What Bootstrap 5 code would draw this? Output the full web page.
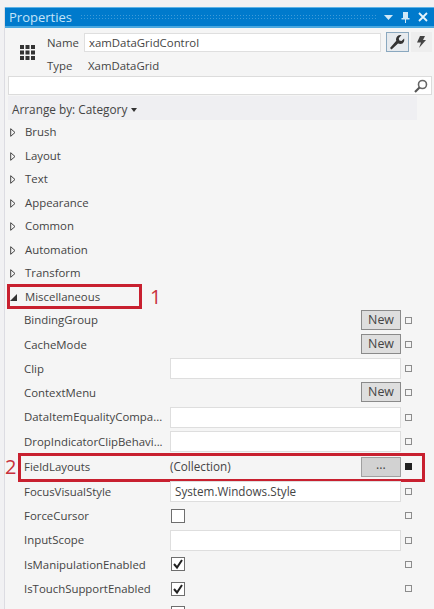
<!DOCTYPE html>
<html lang="en"><head><meta charset="utf-8"><title>Properties</title>
<link href="https://cdn.jsdelivr.net/npm/bootstrap@5.3.0/dist/css/bootstrap.min.css" rel="stylesheet">
<style>
html,body{margin:0;height:609px;overflow:hidden;background:#f1f1f3}
body{font-family:"Open Sans","Liberation Sans",sans-serif;font-size:11.4px;color:#444;line-height:1}
.pane{margin:7px 0 0 4px;height:602px;overflow:hidden;background:#f5f5f5;border-left:1px solid #dcdce2;position:relative}
.titlebar{height:21px;background:#007acc;color:#c4e4f8;padding:0 6px 0 4px;border-top:1px solid #5cb2e6;border-bottom:2px solid #4aa8e0;font-size:13px}
.dots{height:7px;background-image:radial-gradient(#3f9bd8 .7px,transparent .8px);background-size:3px 3px}
.head{height:48px;padding-left:9px}
.gridico{width:15px;margin:0 12px 0 6px}
.lbl{width:37px}
.namebox{width:297px;height:19px;background:#fff;border:1px solid #dfdfdf;padding-left:4px;font-size:11.4px}
.toolb{width:23px;height:20px;border:1px solid #8aa8bf;background:#e6eaee;margin-left:5px}
.toolb2{width:21px;height:20px;background:#eeeeee;margin-left:2px}
.search{height:19px;margin-left:3px;width:424px;background:#fff;border:1px solid #dcdcdc;padding-right:3px}
.arrange{height:24px;margin:1px 0 0 3px;width:409px;background:#efeff2;padding:3px 0 0 4px;font-size:11.8px}
.cat{height:23.5px;padding-left:5px}
.tri{width:15px;flex:none}
.proprow{height:24.25px;padding-left:19px;position:relative}
.pname{width:146px;flex:none;white-space:nowrap}
.pval{width:231px;flex:none;height:21px;font-size:11.7px}
.tbox{background:#fff;border:1px solid #dedede;padding-left:4px}
.newb{width:40px;height:20px;margin-left:auto;background:#dedede;border:1px solid #8a8a8a;text-align:center;line-height:18px;color:#444;font-size:12.4px}
.dotb{background:#d2d2d2;border-color:#a0a0a0;color:#444;line-height:14px}
.marker{width:7px;height:7px;border:1px solid #8c8c8c;background:#f5f5f5;margin-left:4px;flex:none}
.marker.on{background:#222;border-color:#222}
.chk{width:14px;height:14px;border:1px solid #6e6e6e;background:#fff;margin-left:1px}
.redbox{position:absolute;border:3px solid #c8202f;pointer-events:none}
.redbox.one{left:2px;top:-1px;width:135px;height:25px}
.redbox.two{left:13px;top:-1px;width:407px;height:29px}
.rednum{position:absolute;color:#c8303c;font-size:20px;line-height:1}
.rednum.one{left:145px;top:2px}
.rednum.two{left:0;top:3px}
.tall{height:26px}
</style></head><body>
<div class="pane">
 <div class="titlebar d-flex align-items-center gap-2">
  <span>Properties</span><div class="dots flex-grow-1"></div>
  <svg width="9" height="5" viewBox="0 0 9 5"><path d="M0 0h9L4.500 5z" fill="#cfe8f7"/></svg>
  <svg width="9" height="12" viewBox="0 0 9 12"><path d="M2 1h5v6h1.500v1.500H5V12H4V8.500H.5V7H2z" fill="#cfe8f7"/></svg>
  <svg width="10" height="10" viewBox="0 0 10 10"><path d="M1 1l8 8M9 1l-8 8" stroke="#e6f4fc" stroke-width="1.800"/></svg>
 </div>
 <div class="head d-flex align-items-center">
  <svg class="gridico" viewBox="0 0 15 15" height="15"><g fill="#333"><rect width="4" height="4"/><rect x="5.500" width="4" height="4"/><rect x="11" width="4" height="4"/><rect y="5.500" width="4" height="4"/><rect x="5.500" y="5.500" width="4" height="4"/><rect x="11" y="5.500" width="4" height="4"/><rect y="11" width="4" height="4"/><rect x="5.500" y="11" width="4" height="4"/><rect x="11" y="11" width="4" height="4"/></g></svg>
  <div class="d-flex flex-column gap-1 flex-grow-1">
   <div class="d-flex align-items-center"><span class="lbl">Name</span><div class="namebox d-flex align-items-center">xamDataGridControl</div>
    <div class="toolb d-flex align-items-center justify-content-center"><svg width="17" height="16" viewBox="0 0 17 16"><path d="M1 14l1.500 1.500L9 9.500c2.500 1 5 .5 6-2 .4-1 .4-2 .1-3l-2.600 2.400-2.200-.5-.5-2.200L12.500 1c-3-.6-5.500 1.500-5.500 4.300 0 .6.100 1 .3 1.500z" fill="#333"/></svg></div>
    <div class="toolb2 d-flex align-items-center justify-content-center"><svg width="9" height="12" viewBox="0 0 9 12"><path d="M3 0h5L6 4h3L2 12l2-5.500H0z" fill="#444"/></svg></div>
   </div>
   <div class="d-flex align-items-center mt-1"><span class="lbl">Type</span><span class="ps-1">XamDataGrid</span></div>
  </div>
 </div>
 <div class="search d-flex align-items-center justify-content-end"><svg width="14" height="14" viewBox="0 0 14 14"><circle cx="8.500" cy="5.500" r="4" fill="none" stroke="#666" stroke-width="1.600"/><path d="M5.500 8.500L1 13" stroke="#555" stroke-width="2.200"/></svg></div>
 <div class="arrange d-flex align-items-center gap-1">Arrange by: Category <svg width="6" height="4" viewBox="0 0 6 4"><path d="M0 0h6L3 4z" fill="#333"/></svg></div>
 <div class="cat d-flex align-items-center"><span class="tri"><svg width="6" height="9" viewBox="0 0 6 9"><path d="M.7.700L5 4.500.7 8.300z" fill="none" stroke="#444"/></svg></span>Brush</div>
 <div class="cat d-flex align-items-center"><span class="tri"><svg width="6" height="9" viewBox="0 0 6 9"><path d="M.7.700L5 4.500.7 8.300z" fill="none" stroke="#444"/></svg></span>Layout</div>
 <div class="cat d-flex align-items-center"><span class="tri"><svg width="6" height="9" viewBox="0 0 6 9"><path d="M.7.700L5 4.500.7 8.300z" fill="none" stroke="#444"/></svg></span>Text</div>
 <div class="cat d-flex align-items-center"><span class="tri"><svg width="6" height="9" viewBox="0 0 6 9"><path d="M.7.700L5 4.500.7 8.300z" fill="none" stroke="#444"/></svg></span>Appearance</div>
 <div class="cat d-flex align-items-center"><span class="tri"><svg width="6" height="9" viewBox="0 0 6 9"><path d="M.7.700L5 4.500.7 8.300z" fill="none" stroke="#444"/></svg></span>Common</div>
 <div class="cat d-flex align-items-center"><span class="tri"><svg width="6" height="9" viewBox="0 0 6 9"><path d="M.7.700L5 4.500.7 8.300z" fill="none" stroke="#444"/></svg></span>Automation</div>
 <div class="cat d-flex align-items-center"><span class="tri"><svg width="6" height="9" viewBox="0 0 6 9"><path d="M.7.700L5 4.500.7 8.300z" fill="none" stroke="#444"/></svg></span>Transform</div>
 <div class="cat d-flex align-items-center position-relative"><span class="tri"><svg width="7" height="7" viewBox="0 0 7 7"><path d="M7 0v7H0z" fill="#333"/></svg></span>Miscellaneous<div class="redbox one"></div><span class="rednum one">1</span></div>
 <div class="proprow d-flex align-items-center"><span class="pname">BindingGroup</span><div class="pval d-flex"><div class="newb">New</div></div><span class="marker"></span></div>
 <div class="proprow d-flex align-items-center"><span class="pname">CacheMode</span><div class="pval d-flex"><div class="newb">New</div></div><span class="marker"></span></div>
 <div class="proprow d-flex align-items-center"><span class="pname">Clip</span><div class="pval tbox"></div><span class="marker"></span></div>
 <div class="proprow d-flex align-items-center"><span class="pname">ContextMenu</span><div class="pval d-flex"><div class="newb">New</div></div><span class="marker"></span></div>
 <div class="proprow d-flex align-items-center"><span class="pname">DataItemEqualityCompa...</span><div class="pval tbox"></div><span class="marker"></span></div>
 <div class="proprow d-flex align-items-center"><span class="pname">DropIndicatorClipBehavi...</span><div class="pval tbox"></div><span class="marker"></span></div>
 <div class="proprow tall d-flex align-items-center"><span class="pname">FieldLayouts</span><div class="pval d-flex align-items-center">(Collection)<div class="newb dotb">...</div></div><span class="marker on"></span><div class="redbox two"></div><span class="rednum two">2</span></div>
 <div class="proprow d-flex align-items-center"><span class="pname">FocusVisualStyle</span><div class="pval tbox d-flex align-items-center">System.Windows.Style</div><span class="marker"></span></div>
 <div class="proprow d-flex align-items-center"><span class="pname">ForceCursor</span><div class="pval d-flex align-items-center"><div class="chk"></div></div><span class="marker"></span></div>
 <div class="proprow d-flex align-items-center"><span class="pname">InputScope</span><div class="pval tbox"></div><span class="marker"></span></div>
 <div class="proprow d-flex align-items-center"><span class="pname">IsManipulationEnabled</span><div class="pval d-flex align-items-center"><div class="chk d-flex"><svg width="12" height="12" viewBox="0 0 12 12"><path d="M2 6l3 3.500L10 2" fill="none" stroke="#222" stroke-width="2"/></svg></div></div><span class="marker"></span></div>
 <div class="proprow d-flex align-items-center"><span class="pname">IsTouchSupportEnabled</span><div class="pval d-flex align-items-center"><div class="chk d-flex"><svg width="12" height="12" viewBox="0 0 12 12"><path d="M2 6l3 3.500L10 2" fill="none" stroke="#222" stroke-width="2"/></svg></div></div><span class="marker"></span></div>
 <div class="proprow d-flex align-items-center"><span class="pname">OverridesDefaultStyle</span><div class="pval d-flex align-items-center"><div class="chk"></div></div><span class="marker"></span></div>
</div>
</body></html>
